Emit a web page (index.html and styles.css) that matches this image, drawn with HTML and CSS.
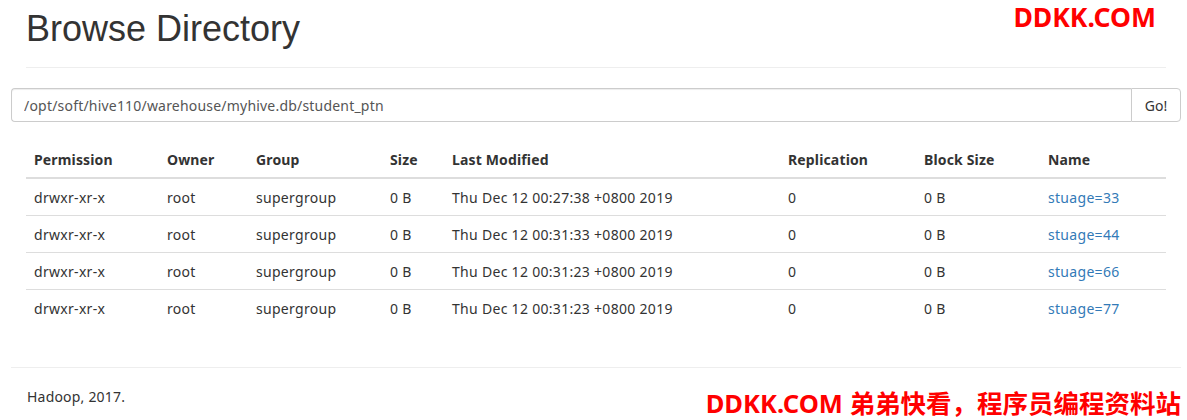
FILE: index.html
```html
<!DOCTYPE html>
<html lang="en">
<head>
    <meta charset="UTF-8">
    <meta name="viewport" content="width=device-width, initial-scale=1.0">
    <title>Browsing HDFS</title>
    <link rel="stylesheet" href="styles.css">
</head>
<body>

<div class="mark mark-top">DDKK.COM</div>

<div class="container">
    <div class="page-header">
        <h1>Browse Directory</h1>
    </div>

    <!-- Path form -->
    <form class="path-form" onsubmit="return false;">
        <input type="text" class="path-input" value="/opt/soft/hive110/warehouse/myhive.db/student_ptn">
        <button type="submit" class="go-btn">Go!</button>
    </form>

    <table class="listing">
        <thead>
            <tr>
                <th class="c-perm">Permission</th>
                <th class="c-owner">Owner</th>
                <th class="c-group">Group</th>
                <th class="c-size">Size</th>
                <th class="c-mod">Last Modified</th>
                <th class="c-rep">Replication</th>
                <th class="c-block">Block Size</th>
                <th class="c-name">Name</th>
            </tr>
        </thead>
        <tbody>
            <tr>
                <td>drwxr-xr-x</td><td>root</td><td>supergroup</td><td>0 B</td>
                <td>Thu Dec 12 00:27:38 +0800 2019</td><td>0</td><td>0 B</td>
                <td><a href="#">stuage=33</a></td>
            </tr>
            <tr>
                <td>drwxr-xr-x</td><td>root</td><td>supergroup</td><td>0 B</td>
                <td>Thu Dec 12 00:31:33 +0800 2019</td><td>0</td><td>0 B</td>
                <td><a href="#">stuage=44</a></td>
            </tr>
            <tr>
                <td>drwxr-xr-x</td><td>root</td><td>supergroup</td><td>0 B</td>
                <td>Thu Dec 12 00:31:23 +0800 2019</td><td>0</td><td>0 B</td>
                <td><a href="#">stuage=66</a></td>
            </tr>
            <tr>
                <td>drwxr-xr-x</td><td>root</td><td>supergroup</td><td>0 B</td>
                <td>Thu Dec 12 00:31:23 +0800 2019</td><td>0</td><td>0 B</td>
                <td><a href="#">stuage=77</a></td>
            </tr>
        </tbody>
    </table>

    <div class="footer">
        <hr>
        <p>Hadoop, 2017.</p>
    </div>
</div>

<div class="mark mark-bottom">DDKK.COM 弟弟快看，程序员编程资料站</div>

</body>
</html>
```

FILE: styles.css
```css
body {
    margin: 0;
    font-family: "Noto Sans", "Noto Sans CJK SC", sans-serif;
    font-size: 14px;
    line-height: 20px;
    color: #333;
    background-color: #fff;
}
.container {
    width: 1170px;
    margin-left: 11px;
    position: relative;
}
.page-header {
    margin: 0 15px 20px;
    padding-bottom: 18px;
    border-bottom: 1px solid #eee;
}
h1 {
    margin: 9px 0 0;
    font-family: "Liberation Sans", Arial, sans-serif;
    font-size: 36px;
    font-weight: normal;
    line-height: 40px;
}
.path-form {
    display: flex;
    margin: 0;
}
.path-input {
    flex: 1;
    height: 34px;
    box-sizing: border-box;
    padding: 6px 12px;
    font-family: "Noto Sans", sans-serif;
    font-size: 14px;
    letter-spacing: 0.2px;
    color: #555;
    border: 1px solid #ccc;
    border-right: none;
    border-radius: 4px 0 0 4px;
    box-shadow: inset 0 1px 1px rgba(0, 0, 0, 0.075);
    outline: none;
}
.go-btn {
    height: 34px;
    width: 50px;
    padding: 0;
    font-family: "Noto Sans", sans-serif;
    font-size: 14px;
    color: #333;
    background-color: #fff;
    border: 1px solid #ccc;
    border-radius: 0 4px 4px 0;
    cursor: pointer;
}
.listing {
    width: 1140px;
    margin: 19px 15px 0;
    border-collapse: collapse;
    table-layout: fixed;
}
.listing th, .listing td {
    padding: 9px 8px 7px;
    text-align: left;
    line-height: 20px;
    white-space: nowrap;
}
.listing th {
    font-weight: bold;
    letter-spacing: 0.15px;
    border-bottom: 2px solid #ddd;
}
.listing td {
    letter-spacing: 0.3px;
    border-bottom: 1px solid #ddd;
}
.listing tbody tr:last-child td {
    border-bottom: none;
}
.c-perm { width: 117px; }
.c-owner { width: 73px; }
.c-group { width: 118px; }
.c-size { width: 46px; }
.c-mod { width: 320px; }
.c-rep { width: 120px; }
.c-block { width: 108px; }
.c-name { width: 110px; }
a {
    color: #337ab7;
    text-decoration: none;
}
.footer hr {
    margin: 41px 0 0;
    border: 0;
    border-top: 1px solid #eee;
}
.footer p {
    margin: 19px 16px 0;
    letter-spacing: 0.2px;
}
.mark {
    position: absolute;
    font-family: "Noto Sans", "Noto Sans CJK SC", sans-serif;
    font-weight: bold;
    color: #ff0000;
    line-height: 1;
    white-space: nowrap;
}
.mark-top {
    top: 4px;
    right: 31px;
    font-size: 26.5px;
}
.mark-bottom {
    top: 391px;
    right: 6px;
    font-size: 25.5px;
}
```
